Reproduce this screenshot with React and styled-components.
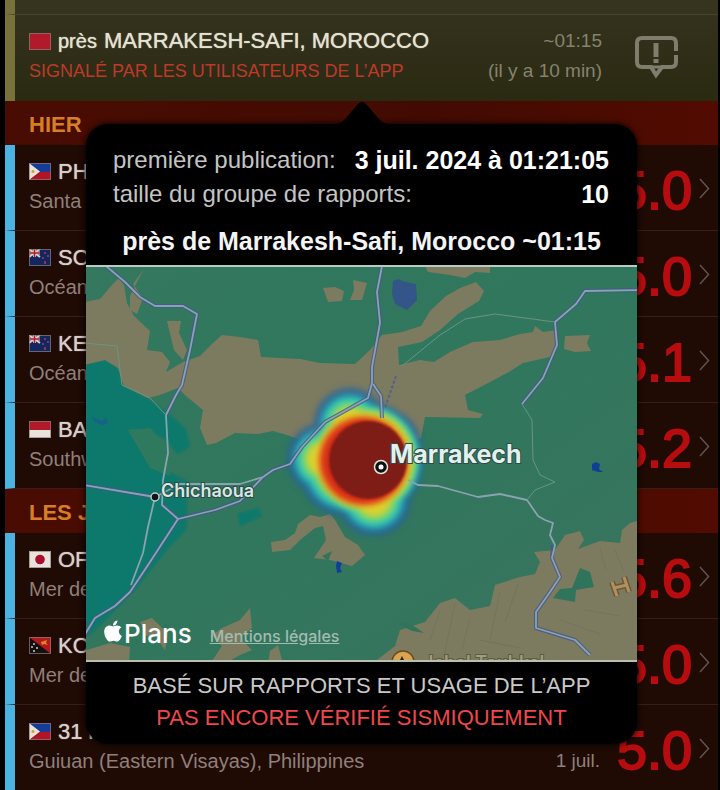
import React from 'react';
import styled, { createGlobalStyle } from 'styled-components';
import { FaApple } from 'react-icons/fa';

const GlobalStyle = createGlobalStyle`
    * {
        box-sizing: border-box;
    }

    body {
        margin: 0;
        background: #000;
        overflow: hidden;
        font-family: "Liberation Sans", Arial, sans-serif;
    }
`

const Page = styled.main`
    position: relative;
    padding: 0 2px 0 5px;
    background: #000;
`

const List = styled.ul`
    list-style: none;
    margin: 0;
    padding: 0;
`

const PreviousReport = styled.div`
    height: 14px;
    border-left: 10px solid #77723a;
    background: #36341e;
`

const ReportRow = styled.section`
    display: flex;
    align-items: center;
    height: 87px;
    padding: 0 39px 4px 14px;
    border-left: 10px solid #77723a;
    border-top: 1px solid #47452b;
    background: linear-gradient(#34321c, #2a2912);
`

const RowText = styled.div`
    flex: 1;
    min-width: 0;
    white-space: nowrap;
`

const NameLine = styled.div`
    display: flex;
    align-items: center;
    gap: 7px;
    height: 30px;
    font-size: 22px;
    color: ${({ $color }) => $color || '#d8ceca'};
    text-shadow: 0 0 1px currentColor;
`

const Near = styled.span`
    font-size: 20px;
`

const SubLine = styled.div`
    height: 28px;
    line-height: 28px;
    font-size: 20px;
    color: #8f807b;
`

const ReportSource = styled.div`
    height: 30px;
    line-height: 30px;
    font-size: 18px;
    color: #bd3a2a;
`

const ReportTime = styled.div`
    width: 130px;
    margin-right: 32px;
    line-height: 30px;
    font-size: 19px;
    text-align: right;
    white-space: nowrap;
    color: #85836f;
`

const DayTitle = styled.h2`
    height: 44px;
    margin: 0;
    padding: 0 24px;
    line-height: 48px;
    font-size: 22px;
    font-weight: 700;
    color: #d67f24;
    background: linear-gradient(90deg, #490c02, #420b02 60%, #520b00);
`

const QuakeLink = styled.a`
    display: flex;
    align-items: center;
    height: 86px;
    padding: 0 8px 0 14px;
    border-left: 10px solid #4ab3e2;
    border-bottom: 1px solid #381e18;
    background: #1f0a04;
    text-decoration: none;
`

const QuakeText = styled(RowText)`
    padding-bottom: 4px;
`

const QuakeDate = styled.time`
    align-self: flex-end;
    height: 42px;
    line-height: 26px;
    margin-right: 16px;
    font-size: 19px;
    color: #8f807b;
`

const Magnitude = styled.strong`
    width: 76px;
    margin-right: 7px;
    padding-top: 4px;
    font-size: 54px;
    font-weight: 400;
    line-height: 80px;
    text-align: right;
    color: #b70d0f;
    -webkit-text-stroke: 2px #b70d0f;
`

const FlagBox = styled.svg`
    flex: none;
    width: 22px;
    height: 17px;
`

const Popup = styled.aside`
    position: absolute;
    top: 124px;
    left: 86px;
    right: 83px;
    border-radius: 22px;
    background: #000;
    box-shadow: 0 0 6px #000;
`

const Pointer = styled.svg`
    position: absolute;
    top: -23px;
    left: 50%;
    width: 60px;
    height: 24px;
    margin-left: -30px;
`

const Facts = styled.dl`
    margin: 0;
    padding: 19px 28px 0 27px;
`

const Fact = styled.div`
    display: flex;
    justify-content: space-between;
    height: 34px;
    line-height: 34px;
    white-space: nowrap;
`

const FactLabel = styled.dt`
    font-size: 24px;
    color: #c4c4c4;
`

const FactValue = styled.dd`
    margin: 0;
    font-size: 25px;
    font-weight: 700;
    color: #fff;
`

const PopupTitle = styled.h1`
    height: 54px;
    margin: 0;
    line-height: 60px;
    font-size: 25px;
    font-weight: 700;
    text-align: center;
    white-space: nowrap;
    color: #f4f4f4;
`

const MapFrame = styled.div`
    position: relative;
    border-top: 2px solid #b9cbc0;
    border-bottom: 2px solid #b9c0ae;
`

const MapSvg = styled.svg`
    display: block;
    width: 100%;
    height: auto;
`

const MapCredits = styled.div`
    position: absolute;
    left: 16px;
    bottom: 12px;
    display: flex;
    align-items: center;
    height: 30px;
    font-family: Inter, sans-serif;
`

const Brand = styled.span`
    display: flex;
    align-items: center;
    font-size: 26px;
    font-weight: 500;
    color: #fff;
`

const AppleMark = styled(FaApple)`
    width: 22px;
    height: 24px;
    margin-bottom: 4px;
`

const LegalLink = styled.a`
    margin-left: 18px;
    padding-top: 5px;
    font-size: 16px;
    font-weight: 500;
    color: #a3bcaf;
`

const Notice = styled.p`
    margin: 0;
    padding: 8px 0 10px;
    line-height: 32px;
    font-size: 22px;
    text-align: center;
    color: #c9c9c9;
`

const Warning = styled.span`
    display: block;
    color: #f0474c;
`

const flags = {
    ma: <rect width="22" height="17" fill="#b11a2b" />,
    ph: <g>
        <rect width="22" height="9" fill="#183c96" />
        <rect y="9" width="22" height="8" fill="#ae1526" />
        <path d="M0 0L11 8.500L0 17Z" fill="#e8e2dc" />
        <circle cx="4" cy="8.500" r="1.500" fill="#c9a33a" />
    </g>,
    nz: <g>
        <rect width="22" height="17" fill="#14265f" />
        <path d="M0 0L11 8M11 0L0 8" stroke="#d8ceca" strokeWidth="2" />
        <path d="M5.500 0V8M0 4H11" stroke="#d8ceca" strokeWidth="3" />
        <path d="M5.500 0V8M0 4H11" stroke="#b11a2b" strokeWidth="1.500" />
        <path d="M16 3v2M19 6v2M14 8v2M16 12v3" stroke="#a83c56" strokeWidth="1.500" />
    </g>,
    id: <g>
        <rect width="22" height="9" fill="#b11a2b" />
        <rect y="9" width="22" height="8" fill="#e8e2dc" />
    </g>,
    jp: <g>
        <rect width="22" height="17" fill="#e8e2dc" />
        <circle cx="11" cy="8.500" r="4.800" fill="#a80f2a" />
    </g>,
    pg: <g>
        <rect width="22" height="17" fill="#14100f" />
        <path d="M0 0H22V17Z" fill="#b01a1c" />
        <path d="M12 5l3-1 3-1-1 3 2 2-4-1-2 1z" fill="#e0842a" />
        <path d="M5 6v2M3 9v2M8 10v2M5 13v2" stroke="#cfc6c2" strokeWidth="1.500" />
    </g>,
};

const Flag = ({ code }) => (
    <FlagBox viewBox="0 0 22 17">
        {flags[code]}
        <rect x="0.500" y="0.500" width="21" height="16" fill="none" stroke="#8a7f7a" strokeOpacity="0.700" />
    </FlagBox>
);

const Chevron = () => (
    <svg width="11" height="22" viewBox="0 0 11 22" fill="none" stroke="#62524d" strokeWidth="1.500">
        <path d="M1 2L9.500 11.500L1 21" />
    </svg>
);

const ReportIcon = () => (
    <svg width="45" height="46" viewBox="0 0 45 46" fill="none" stroke="#7f7d6d">
        <path d="M42 18V10Q42 5 37 5H8Q3 5 3 10V29Q3 34 8 34H17L22 42L28 34H37Q42 34 42 29V22" strokeWidth="4" />
        <path d="M17 34H28" strokeWidth="3" />
        <path d="M22 10V24M22 26V30" strokeWidth="5" />
    </svg>
);

const days = [
    {
        title: 'HIER',
        quakes: [
            { flag: 'ph', name: 'PHILIPPINES', place: 'Santa Cruz', magnitude: '5.0' },
            { flag: 'nz', name: 'SOUTH OF FIJI', place: 'Océan Pacifique', magnitude: '5.0' },
            { flag: 'nz', name: 'KERMADEC', place: 'Océan Pacifique', magnitude: '5.1' },
            { flag: 'id', name: 'BANTEN', place: 'Southwest Java', magnitude: '5.2' },
        ],
    },
    {
        title: 'LES JOURS',
        quakes: [
            { flag: 'jp', name: 'OFF HONSHU', place: 'Mer de Chine', magnitude: '5.6' },
            { flag: 'pg', name: 'KOKOPO', place: 'Mer de Salomon', magnitude: '5.0' },
            { flag: 'ph', name: '31 km', place: 'Guiuan (Eastern Visayas), Philippines', date: '1 juil.', magnitude: '5.0' },
        ],
    },
];

// the same lobes are drawn from the coldest colour to the hottest, smaller each time
const lobes = [
    [350, 424, 36],
    [323, 459, 36],
    [383, 447, 38],
    [374, 499, 37],
    [385, 472, 36],
    [345, 470, 46],
];

const heatLayers = [
    { color: '#2a5f9c', inset: 0, opacity: 0.75 },
    { color: '#2389a8', inset: 5, opacity: 0.9 },
    { color: '#35c9b4', inset: 9, opacity: 1 },
    { color: '#7fd765', inset: 15, opacity: 1 },
    { color: '#dfd02f', inset: 20, opacity: 1 },
];

const ReportMap = () => (
    <MapSvg viewBox="0 0 551 393" preserveAspectRatio="xMidYMid slice">
        <defs>
            <filter id="soft" x="-20%" y="-20%" width="140%" height="140%">
                <feGaussianBlur stdDeviation="3" />
            </filter>
            <filter id="edge">
                <feGaussianBlur stdDeviation="1" />
            </filter>
            <linearGradient id="land" x1="0" y1="0" x2="1" y2="1">
                <stop offset="0" stopColor="#33785f" />
                <stop offset="0.500" stopColor="#30775d" />
                <stop offset="1" stopColor="#3a735e" />
            </linearGradient>
        </defs>
        <rect width="551" height="393" fill="url(#land)" />
        <g transform="translate(-86 -267)">
            {/* low ground */}
            <g fill="#08786c" filter="url(#edge)">
                <path d="M80 366L105 360L118 368L122 385L150 400L166 412L185 428L190 446L178 454L164 438L145 432L128 430L140 444L165 470L188 482L186 530L168 548L135 590L95 630L80 640Z" />
                <path d="M238 514L258 508L262 516L240 526Z" />
            </g>
            <path d="M128 430L150 428L166 445L170 476L150 468Z" fill="#2f7a5f" />

            {/* dry plains and mountains */}
            <g fill="#7c7b60">
                <path d="M80 303L100 299L112 285L119 278L124 285L127 303L134 316L150 331L147 350L162 352L170 362L166 372L183 362L200 356L213 343L222 335L240 337L258 340L261 357L300 359L320 363L355 364L370 350L382 335L402 332L421 326L430 311L446 296L460 288L476 282L484 291L479 301L458 314L440 330L422 342L398 347L399 365L420 360L434 362L450 352L473 342L500 340L520 334L533 332L535 326L543 332L557 330L558 348L550 357L523 363L507 373L490 382L465 395L468 410L483 414L480 418L425 417L421 438L390 450L330 450L287 435L273 431L258 434L235 433L216 443L207 445L200 428L203 410L186 396L178 388L160 395L148 398L124 386L118 368L105 360L80 366Z" />
                <path d="M144 269L133 284L143 298L137 314L130 310L130 296L138 280Z" />
                <path d="M167 321L181 321L179 333L187 350L183 360L174 350Z" />
                <path d="M323 288L335 287L344 291L342 301L328 302Z" />
                <path d="M353 280L367 283L362 300L350 300L354 290Z" />
                <path d="M425 266H490V273L475 272L465 278L450 275L428 272Z" />
                <path d="M565 336L590 335L587 343L591 351L575 352L564 349Z" />
                <path d="M271 542L272 552L290 550L300 540L315 528L323 526L326 540L314 558L330 560L352 566L365 555L358 545L345 537L335 520L330 514L320 517L310 515L298 524L295 533L285 540Z" />
                <path d="M80 652L110 643L130 647L129 664H80Z" />
                <path d="M140 622L152 618L168 634L165 650L154 634L146 636Z" />
                <path d="M212 635L222 628L240 620L250 608L252 628L240 638L252 650L238 656L225 664H210L222 646Z" />
                <path d="M270 651L278 645L283 664H268Z" />
                <path d="M372 664L395 646L400 630L425 622L440 603L455 598L470 610L490 606L495 585L520 577L535 574L540 562L534 552L555 550L565 535L580 531L584 540L578 549L600 541L620 543L622 530L630 523L640 520V664Z" />
            </g>
            <g fill="#31745c">
                <path d="M580 568L590 572L594 587L576 590L575 602L553 598L560 589L572 588Z" />
                <path d="M322 556L332 551L328 561Z" />
                <path d="M398 624L412 631L424 633L408 622Z" />
            </g>
            <g stroke="#66705a" strokeOpacity="0.500" fill="none">
                <path d="M440 610L430 640M455 603L444 656M470 618L462 650M500 592L490 640M518 584L505 622M600 548L606 570M615 550L624 572M585 610L620 616M560 620L600 634M480 640L520 648" />
            </g>

            {/* lakes */}
            <g fill="#33558a">
                <path d="M393 281L399 279L402 281L416 284L417 300L407 310L395 304L392 294Z" />
            </g>
            <path d="M592 464L596 462L600 464L599 469L603 472L598 472L592 470ZM337 561L342 563L340 568L342 572L337 573L336 566Z" fill="#123f96" />
            <path d="M92 417L102 421L106 418L108 423L101 425L94 421Z" fill="#17618a" />

            {/* heat of user reports */}
            {heatLayers.map(layer => (
                <g key={layer.color} opacity={layer.opacity} filter="url(#soft)">
                    {lobes.map(([x, y, r]) => <circle key={x} cx={x} cy={y} r={r - layer.inset} fill={layer.color} />)}
                    <circle cx="365" cy="460" r={58 - layer.inset / 2} fill={layer.color} />
                </g>
            ))}
            <circle cx="363" cy="461" r="44" fill="#e8681c" filter="url(#soft)" />
            <circle cx="364" cy="461" r="42" fill="#d42a14" filter="url(#soft)" />
            <circle cx="368" cy="460" r="39" fill="#7e1a17" filter="url(#edge)" />

            {/* roads */}
            <g fill="none" stroke="#46578c" strokeWidth="4" strokeLinejoin="round" strokeOpacity="0.800">
                <path d="M382 266L377 292L380 323L372 367L372 383L368 398L325 422L302 447L290 464L273 470L263 477L240 501L215 510L178 519L150 562L130 592L115 606L95 618L84 636" />
                <path d="M640 290L585 291L576 304L555 322L557 345L543 378L522 404" />
                <path d="M106 266L125 282L140 297L155 306L183 306L197 314L190 350L182 385L176 395L166 415" />
                <path d="M553 545L552 558L560 577L550 592L536 612L536 628L575 640L590 655" />
                <path d="M373 384L381 396L382 418" />
                <path d="M84 485L155 497M163 505L178 519" />
            </g>
            <g fill="none" stroke="#8aa3b0" strokeWidth="1.800" strokeLinejoin="round">
                <path d="M382 266L377 292L380 323L372 367L372 383L368 398L325 422L302 447L290 464L273 470L263 477L240 501L215 510L178 519L150 562L130 592L115 606L95 618L84 636" />
                <path d="M640 290L585 291L576 304L555 322L557 345L543 378L522 404" />
                <path d="M106 266L125 282L140 297L155 306L183 306L197 314L190 350L182 385L176 395L166 415L168 453L163 480L162 505L178 519" />
                <path d="M84 485L155 497L180 484H240L263 477" />
                <path d="M155 497L148 527L143 553L131 585" />
                <path d="M408 480L418 485L438 486L478 497L500 494L527 500L538 516L545 520L553 523L550 535L555 545L552 558L560 577L550 592L536 612L536 628L575 640L590 655" />
                <path d="M373 384L381 396L382 418" />
            </g>
            <g fill="none" stroke="#699583" strokeWidth="1">
                <path d="M555 322L495 314L465 319L440 335L402 366" />
                <path d="M522 404L532 420L533 460L540 475L555 482L535 490L527 500" />
                <path d="M84 343L117 346L122 385L150 398L166 415" />
            </g>
            <path d="M396 376L385 408" stroke="#55608a" strokeWidth="2" strokeDasharray="3 2" />

            {/* places */}
            <circle cx="155" cy="497" r="4" fill="#101414" stroke="#b9cfc6" strokeWidth="1.500" />
            <circle cx="381" cy="467" r="6.500" fill="#101010" stroke="#e6e6e6" strokeWidth="1.500" />
            <circle cx="381" cy="467" r="2.500" fill="#fff" />
            <g fontFamily="Inter, sans-serif" stroke="#2d4b4b" strokeWidth="2" paintOrder="stroke">
                <text x="390" y="463" fontSize="25" fontWeight="700" fill="#e2f1ec">Marrakech</text>
                <text x="161" y="497" fontSize="18" fontWeight="600" fill="#d7e8e1">Chichaoua</text>
                <text x="423" y="669" fontSize="18" fontWeight="600" fill="#a39c7e" stroke="#5a5944">Jebel Toubkal</text>
            </g>
            <path d="M612 582L617 596M624 577L629 592M614 588L627 585" stroke="#6d5738" strokeWidth="6" />
            <path d="M612 582L617 596M624 577L629 592M614 588L627 585" stroke="#b1905f" strokeWidth="3" />
            <circle cx="403" cy="662" r="11" fill="#dba452" stroke="#6b4a20" strokeWidth="1.500" />
            <path d="M398 664L402 656L406 664Z" fill="#2e2415" />
        </g>
    </MapSvg>
);

const App = () => {
    return <React.Fragment>
        <GlobalStyle />
        <Page>
            <PreviousReport />
            <ReportRow>
                <RowText>
                    <NameLine $color="#e4e2d2">
                        <Flag code="ma" />
                        <Near>près</Near>
                        MARRAKESH-SAFI, MOROCCO
                    </NameLine>
                    <ReportSource>SIGNALÉ PAR LES UTILISATEURS DE L’APP</ReportSource>
                </RowText>
                <ReportTime>
                    ~01:15<br />
                    (il y a 10 min)
                </ReportTime>
                <ReportIcon />
            </ReportRow>

            {days.map(day => (
                <section key={day.title}>
                    <DayTitle>{day.title}</DayTitle>
                    <List>
                        {day.quakes.map(quake => (
                            <li key={quake.name}>
                                <QuakeLink href="#">
                                    <QuakeText>
                                        <NameLine>
                                            <Flag code={quake.flag} />
                                            {quake.name}
                                        </NameLine>
                                        <SubLine>{quake.place}</SubLine>
                                    </QuakeText>
                                    {quake.date && <QuakeDate>{quake.date}</QuakeDate>}
                                    <Magnitude>{quake.magnitude}</Magnitude>
                                    <Chevron />
                                </QuakeLink>
                            </li>
                        ))}
                    </List>
                </section>
            ))}

            <Popup>
                <Pointer viewBox="0 0 60 24">
                    <path d="M0 24Q8 24 14 17L25 4Q30 -2 35 4L46 17Q52 24 60 24Z" fill="#000" />
                </Pointer>
                <Facts>
                    <Fact>
                        <FactLabel>première publication:</FactLabel>
                        <FactValue>3 juil. 2024 à 01:21:05</FactValue>
                    </Fact>
                    <Fact>
                        <FactLabel>taille du groupe de rapports:</FactLabel>
                        <FactValue>10</FactValue>
                    </Fact>
                </Facts>
                <PopupTitle>près de Marrakesh-Safi, Morocco ~01:15</PopupTitle>
                <MapFrame>
                    <ReportMap />
                    <MapCredits>
                        <Brand><AppleMark />Plans</Brand>
                        <LegalLink href="#">Mentions légales</LegalLink>
                    </MapCredits>
                </MapFrame>
                <Notice>
                    BASÉ SUR RAPPORTS ET USAGE DE L’APP
                    <Warning>PAS ENCORE VÉRIFIÉ SISMIQUEMENT</Warning>
                </Notice>
            </Popup>
        </Page>
    </React.Fragment>
}

export default App;
